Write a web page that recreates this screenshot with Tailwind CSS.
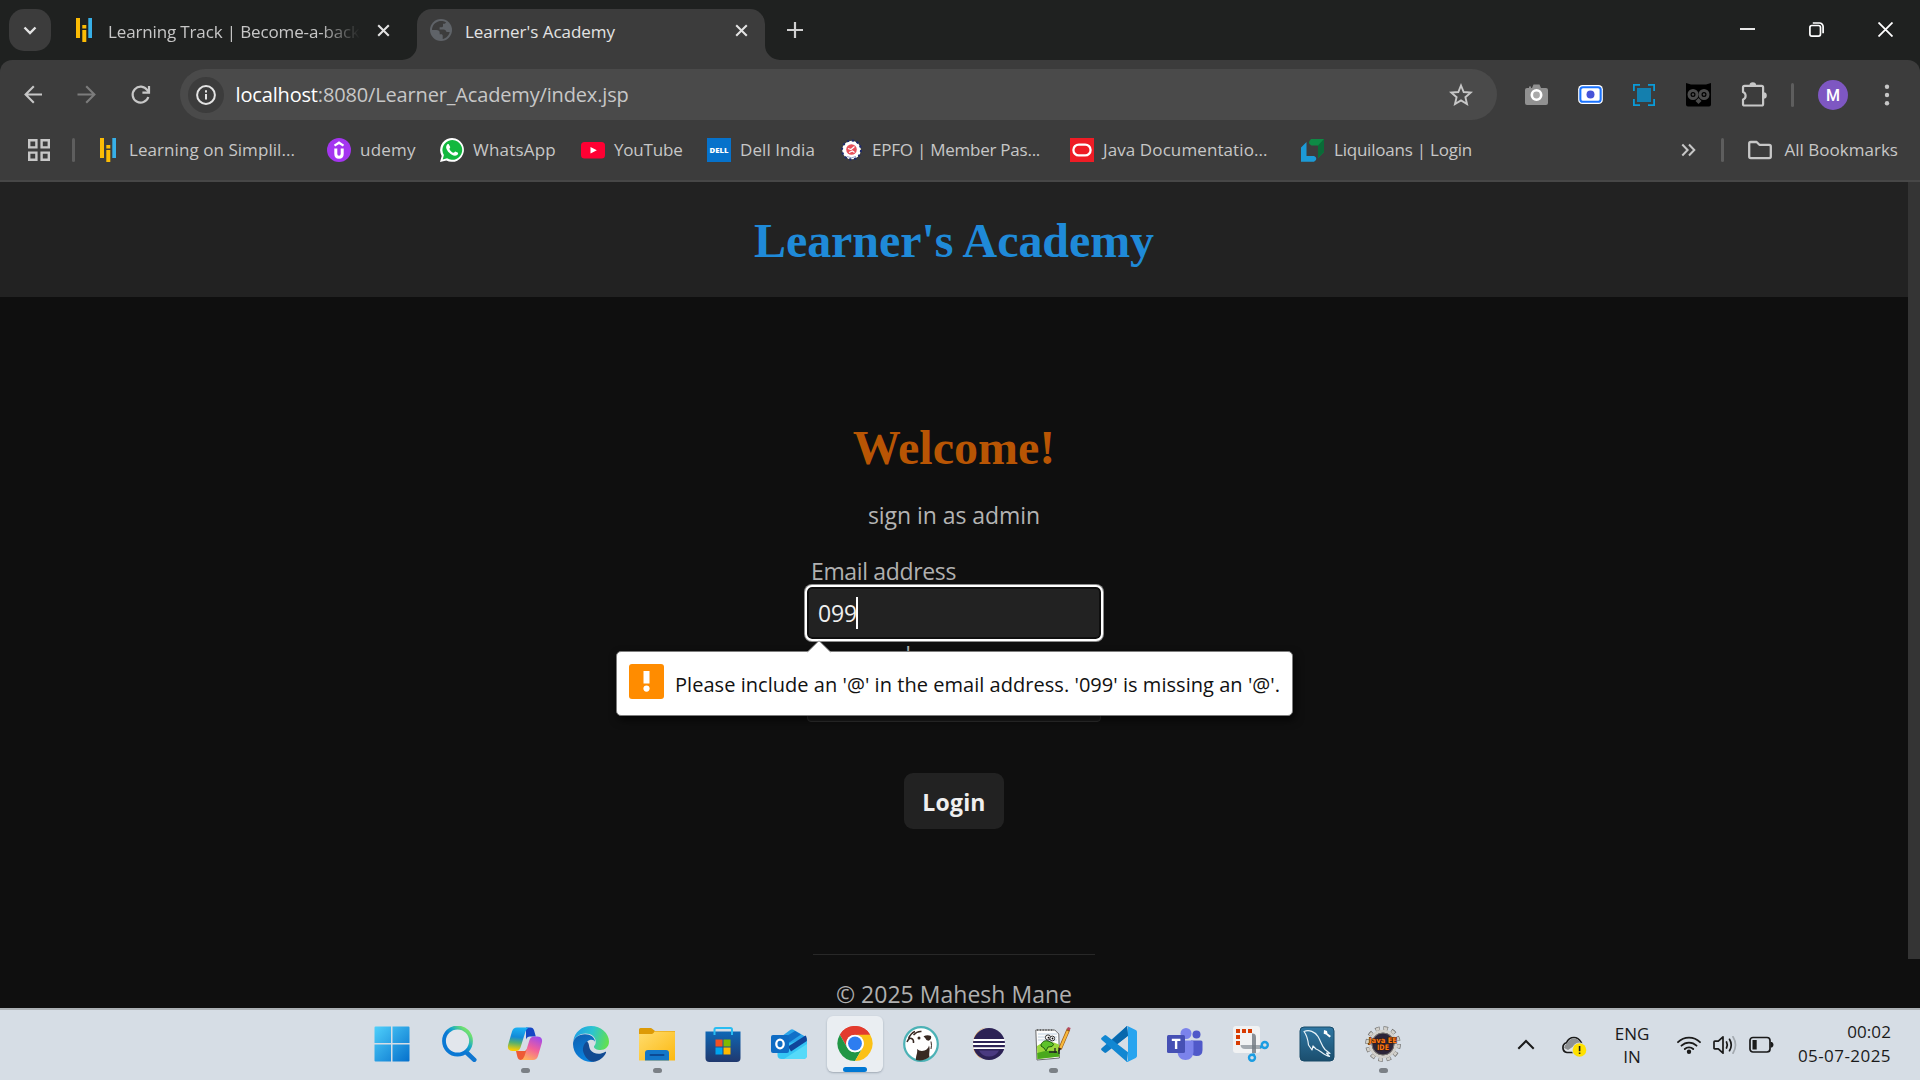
<!DOCTYPE html>
<html lang="en">
<head>
<meta charset="utf-8">
<title>Learner's Academy</title>
<script src="https://cdn.jsdelivr.net/npm/@tailwindcss/browser@4"></script>
</head>
<body class="w-[1920px] h-[1080px] overflow-hidden bg-[#0f0f0f] font-['Open_Sans','Noto_Sans',sans-serif] flex flex-col">

<!-- Tab strip -->
<header class="h-[60px] shrink-0 bg-[#1f2120] flex items-start text-[17px] leading-[42px] pt-[9px]">
  <div class="ml-[9px] size-[42px] rounded-[15px] bg-[#3c3c3c] flex items-center justify-center">
    <svg class="size-[14px]" viewBox="0 0 14 14" fill="none" stroke="#e3e3e3" stroke-width="2.4"><path d="M1.500 4.500 7 10l5.500-5.500"/></svg>
  </div>
  <div class="ml-[21px] w-[345px] h-[42px] flex items-center">
    <svg class="w-[24px] h-[24px] shrink-0" viewBox="0 0 24 24"><path fill="#fbbc05" d="M4 0h4v20H4zM10.300 7h4v3.500h-4zM10.300 12h4v12h-4z"/><path fill="#37b0e8" d="M16.300 0h3.700v20h-3.700z"/></svg>
    <span class="ml-[12px] w-[252px] pt-[3px] overflow-hidden whitespace-nowrap tracking-[-0.14px] text-[#c7c7c7] [mask-image:linear-gradient(to_right,#000_84%,transparent_100%)]">Learning Track | Become-a-back</span>
    <svg class="ml-[17px] size-[13px] shrink-0" viewBox="0 0 14 14" stroke="#e3e3e3" stroke-width="2.200"><path d="M1.300 1.300l11.400 11.400M12.700 1.300 1.300 12.700"/></svg>
  </div>
  <div class="relative w-[348px] h-[51px] rounded-t-[15px] bg-[#3c3c3c] flex items-start">
    <svg class="absolute -left-[15px] bottom-0 size-[15px]" viewBox="0 0 15 15"><path fill="#3c3c3c" d="M15 0v15H0A15 15 0 0 0 15 0z"/></svg>
    <svg class="absolute -right-[15px] bottom-0 size-[15px]" viewBox="0 0 15 15"><path fill="#3c3c3c" d="M0 0v15h15A15 15 0 0 1 0 0z"/></svg>
    <svg class="ml-[13px] mt-[10px] size-[22px] shrink-0" viewBox="0 0 22 22"><circle cx="11" cy="11" r="11" fill="#5f6368"/><path fill="#3c3c3c" d="M9 2.200C5 3.200 2.100 6.500 2 11l4.500 0c2 0 3.200 1 3.200 2.800v1.400h1.500c1 0 1.500.6 1.500 1.600V20c3.500-.7 6.300-3.500 7-7h-3.200c-.4-1.600-1.300-2.600-3-2.600H9.600V8.300h1.800c1 0 1.600-.6 1.600-1.600V4.800h1.800l1.300-1.200C14 2 11 1.800 9 2.200z"/></svg>
    <span class="ml-[13px] w-[270px] pt-[2px] whitespace-nowrap tracking-[-0.03px] text-[#e3e3e3]">Learner's Academy</span>
    <svg class="mt-[15px] size-[13px] shrink-0" viewBox="0 0 14 14" stroke="#e3e3e3" stroke-width="2.200"><path d="M1.300 1.300l11.400 11.400M12.700 1.300 1.300 12.700"/></svg>
  </div>
  <svg class="ml-[22px] mt-[13px] size-[16px]" viewBox="0 0 16 16" stroke="#d0d0d0" stroke-width="2.200"><path d="M8 0v16M0 8h16"/></svg>
  <div class="ml-auto mr-[27px] mt-[13px] flex gap-[54px]">
    <svg class="size-[15px]" viewBox="0 0 15 15"><path d="M0 7h15" stroke="#fff" stroke-width="1.800"/></svg>
    <svg class="size-[15px]" viewBox="0 0 15 15" fill="none" stroke="#fff" stroke-width="1.700"><rect x=".9" y="3.500" width="10.600" height="10.600" rx="2"/><path d="M3.800 1h6.700a3.600 3.600 0 0 1 3.600 3.600v6.600"/></svg>
    <svg class="size-[15px]" viewBox="0 0 15 15" stroke="#fff" stroke-width="1.800"><path d="M.5.5l14 14M14.500.5l-14 14"/></svg>
  </div>
</header>

<div class="shrink-0 bg-[#1f2120]">
<div class="h-[122px] rounded-t-[12px] bg-[#3c3c3c] border-b-2 border-[#474747]">
  <!-- Navigation toolbar -->
  <nav class="h-[69px] pt-[9px] flex items-start">
    <div class="h-[51px] w-[180px] pl-[24px] flex items-center">
      <svg class="size-[19px]" viewBox="0 0 19 19" fill="none" stroke="#c7c7c7" stroke-width="2.100"><path d="M18 9.500H1.800M9.800 1.300 1.600 9.500l8.200 8.200"/></svg>
      <svg class="ml-[34px] size-[19px]" viewBox="0 0 19 19" fill="none" stroke="#7c7c7c" stroke-width="2.100"><path d="M.5 9.500h16.700M9.200 1.300l8.200 8.200-8.200 8.200"/></svg>
      <svg class="ml-[35px] size-[20px]" viewBox="0 0 20 20" fill="none" stroke="#c7c7c7" stroke-width="2.200"><path d="M17.300 12a8 8 0 1 1-1-6.800l1.700 2"/><path d="M18 1v6.600h-6.600"/></svg>
    </div>
    <div class="w-[1317px] h-[51px] rounded-full bg-[#4a4a4a] flex items-center pl-[8px] pr-[24px]">
      <div class="size-[36px] rounded-full bg-[#3c3c3c] flex items-center justify-center">
        <svg class="size-[20px]" viewBox="0 0 20 20" fill="none" stroke="#e3e3e3" stroke-width="2"><circle cx="10" cy="10" r="8.900"/><path d="M10 9v5.600M10 5.300v2.200"/></svg>
      </div>
      <span class="ml-[11.500px] text-[20px] tracking-[-0.16px] text-[#c7c7c7] whitespace-nowrap"><span class="text-white">localhost</span>:8080/Learner_Academy/index.jsp</span>
      <svg class="ml-auto size-[24px]" viewBox="0 0 24 24" fill="none" stroke="#c7c7c7" stroke-width="1.900"><path d="M12 2.500l2.700 6.500 7 .6-5.300 4.600 1.600 6.900-6-3.700-6 3.700 1.600-6.900L2.300 9.600l7-.6z"/></svg>
    </div>
    <div class="ml-[28px] h-[51px] flex items-center">
      <svg class="w-[23px] h-[22px]" viewBox="0 0 23 22"><path fill="#919191" d="M2 4h2V2.500h2V4h1l1.500-3.500h6L16 4h5a2 2 0 0 1 2 2v13a2 2 0 0 1-2 2H2a2 2 0 0 1-2-2V6a2 2 0 0 1 2-2z"/><circle cx="11.500" cy="11" r="4.700" fill="#a9a9a9" stroke="#fff" stroke-width="2.600"/></svg>
      <svg class="ml-[30px] w-[25px] h-[19px]" viewBox="0 0 26 20"><rect width="26" height="20" rx="4.500" fill="#fff"/><rect x="2.300" y="2.300" width="21.400" height="15.400" rx="2.800" fill="#fff" stroke="#1a73ff" stroke-width="2.200"/><circle cx="13" cy="10" r="4.200" fill="#4653d8"/></svg>
      <svg class="ml-[29px] size-[24px]" viewBox="0 0 24 24"><rect x="5" y="5" width="14" height="14" fill="#147fae"/><path fill="none" stroke="#0a9bd8" stroke-width="1.800" d="M1.900 8V1.900H8M16 1.900h6.100V8M22.100 16v6.100H16M8 22.100H1.900V16"/></svg>
      <svg class="ml-[30px] size-[25px]" viewBox="0 0 25 25"><path fill="#000" d="M0 1l5 1.400h15L25 1v21.500q0 2-2 2H2q-2 0-2-2z"/><circle cx="7" cy="12.500" r="4" fill="none" stroke="#4b4b4b" stroke-width="3"/><circle cx="18" cy="12.500" r="4" fill="none" stroke="#4b4b4b" stroke-width="3"/><circle cx="7" cy="12.500" r="1.200" fill="#4b4b4b"/><circle cx="18" cy="12.500" r="1.200" fill="#4b4b4b"/><path fill="#4b4b4b" d="M12.500 16l3 3-3 3-3-3z"/></svg>
      <svg class="ml-[30px] -mt-[2px] size-[26px]" viewBox="0 0 26 26"><path fill="none" stroke="#c7c7c7" stroke-width="2.200" stroke-linejoin="round" d="M2 6.500q0-1.600 1.600-1.600h17q1.500 0 1.500 1.600v16.400q0 1.600-1.500 1.600h-17Q2 24.500 2 22.900v-4.400a4 4 0 0 0 0-7.500z"/><path fill="#c7c7c7" d="M8.500 4.500a3.300 3.300 0 0 1 6.600 0zM22.500 11.200a3.300 3.300 0 0 1 0 6.600z"/></svg>
      <div class="ml-[24px] w-[3px] h-[24px] rounded bg-[#5e5e5e]"></div>
      <div class="ml-[24px] size-[30px] rounded-full bg-[#7e57c2] text-white font-[Roboto,sans-serif] text-[16px] leading-[31px] font-medium text-center">M</div>
      <svg class="ml-[36px] w-[6px] h-[22px]" viewBox="0 0 6 22" fill="#c7c7c7"><circle cx="3" cy="2.700" r="2.200"/><circle cx="3" cy="11" r="2.200"/><circle cx="3" cy="19.300" r="2.200"/></svg>
    </div>
  </nav>
  <!-- Bookmarks bar -->
  <div class="h-[42px] flex items-center text-[17px] leading-[24px] text-[#c7c7c7] whitespace-nowrap pl-[28px] pr-[22px]">
    <svg class="size-[22px] shrink-0" viewBox="0 0 22 22" fill="none" stroke="#c7c7c7" stroke-width="2.400"><path d="M1.200 1.200h7.200v7.200H1.200zM13.600 1.200h7.200v7.200h-7.200zM1.200 13.600h7.200v7.200H1.200zM13.600 13.600h7.200v7.200h-7.200z"/></svg>
    <div class="ml-[22px] mr-[21px] w-[3px] h-[24px] rounded bg-[#5e5e5e]"></div>
    <div class="w-[231px] flex gap-[9px]">
      <svg class="size-[24px]" viewBox="0 0 24 24"><path fill="#fbbc05" d="M4 0h4v20H4zM10.300 7h4v3.500h-4zM10.300 12h4v12h-4z"/><path fill="#37b0e8" d="M16.300 0h3.700v20h-3.700z"/></svg>
      <span class="tracking-[0.06px]">Learning on Simplil...</span>
    </div>
    <div class="w-[113px] flex gap-[9px]">
      <svg class="size-[24px]" viewBox="0 0 24 24"><circle cx="12" cy="12" r="12" fill="#a435f0"/><path fill="none" stroke="#fff" stroke-width="2.300" d="M7.500 7.600 12 4.700l4.500 2.900"/><path fill="none" stroke="#fff" stroke-width="3" d="M8.800 10.500v5.200q0 3.500 3.200 3.500t3.200-3.500v-5.200"/></svg>
      <span class="tracking-[0.2px]">udemy</span>
    </div>
    <div class="w-[141px] flex gap-[9px]">
      <svg class="size-[24px]" viewBox="0 0 24 24"><path fill="#fff" d="M0 24l1.700-6.100A11.900 11.900 0 1 1 6.300 22.400z"/><path fill="#12b83e" d="M2.700 21.400l1.200-4.300a9.900 9.900 0 1 1 3.200 3.200z"/><path fill="#fff" d="M8.900 6.400c-.3-.6-1.200-.6-1.700 0C5 8.800 6.700 12 9 14.500c2.400 2.500 5.800 4.200 8.200 2.500.9-.6 1-1.500.8-2.200l-2.700-1.300c-.6 0-1 1.300-1.700 1.300-1.300-.3-3.700-2.300-4.200-3.900 0-.5 1-1.100.8-1.900z"/></svg>
      <span class="tracking-[0.2px]">WhatsApp</span>
    </div>
    <div class="w-[126px] flex gap-[9px]">
      <svg class="size-[24px]" viewBox="0 0 24 24"><rect y="4" width="24" height="16.500" rx="3.500" fill="#ff0033"/><path fill="#fff" d="M9.500 9l6.300 3.300-6.300 3.300z"/></svg>
      <span class="tracking-[-0.18px]">YouTube</span>
    </div>
    <div class="w-[132px] flex gap-[9px]">
      <svg class="size-[24px]" viewBox="0 0 24 24"><path fill="#0672cb" d="M0 0h24v24H0z"/><text x="12" y="14.800" text-anchor="middle" textLength="19" lengthAdjust="spacingAndGlyphs" font-size="7.500" font-weight="800" font-family="Open Sans, sans-serif" fill="#fff">DELL</text></svg>
      <span class="tracking-[0.08px]">Dell India</span>
    </div>
    <div class="w-[231px] flex gap-[9px]">
      <svg class="size-[24px]" viewBox="0 0 24 24"><circle cx="12.500" cy="12" r="9.300" fill="#fff" stroke="#1d2a6b" stroke-width="2.400" stroke-dasharray="2.200 2.670"/><circle cx="12.500" cy="12" r="8.500" fill="#fff"/><circle cx="12.500" cy="11.500" r="5.300" fill="#e8505a"/><path fill="none" stroke="#fff" stroke-width="1.200" d="M9 10.500l3 1 3.500-3M10 14.500l3.500-1.500 2 1.500"/><path d="M8 18.500q4.500 2.500 9 0" fill="none" stroke="#9aa4c8" stroke-width="1"/></svg>
      <span class="tracking-[-0.24px]">EPFO | Member Pas...</span>
    </div>
    <div class="w-[231px] flex gap-[9px]">
      <svg class="size-[24px]" viewBox="0 0 24 24"><path fill="#ee1c25" d="M0 0h24v24H0z"/><rect x="3.400" y="6.600" width="17.200" height="10.800" rx="5.400" fill="none" stroke="#fff" stroke-width="2.300"/></svg>
      <span class="tracking-[0.1px]">Java Documentatio...</span>
    </div>
    <div class="flex gap-[9px]">
      <svg class="size-[24px]" viewBox="0 0 24 24"><path fill="#1c9ad6" d="M0 9.500 5.500 4v14H13q3 1 2 4l-2 1.700H0z"/><path fill="#0e8a45" d="M10 1h13v13l-6 6V7.500h-6.500Q7 5.500 8.500 3z"/><path fill="#0a6b38" d="M17 7.500 23 1v13l-6 6z"/></svg>
      <span class="tracking-[-0.22px]">Liquiloans | Login</span>
    </div>
    <svg class="ml-auto w-[15px] h-[14px] shrink-0" viewBox="0 0 15 14" fill="none" stroke="#c7c7c7" stroke-width="2"><path d="M1.300 1.500 6.600 7l-5.300 5.500M8 1.500 13.300 7 8 12.500"/></svg>
    <div class="ml-[25px] w-[3px] h-[24px] rounded bg-[#5e5e5e]"></div>
    <svg class="ml-[24px] w-[24px] h-[20px] shrink-0" viewBox="0 0 24 20" fill="none" stroke="#c7c7c7" stroke-width="2.300" stroke-linejoin="round"><path d="M2.800 2h5.800l2.800 2.800h9.800q1.600 0 1.600 1.600v10.200q0 1.600-1.600 1.600H2.800q-1.600 0-1.600-1.600V3.600Q1.200 2 2.800 2z"/></svg>
    <span class="ml-[12px] tracking-[0.02px]">All Bookmarks</span>
  </div>
</div>
</div>

<!-- Web page -->
<div class="h-[826px] shrink-0 flex overflow-hidden">
  <main class="w-[1908px] h-[826px] overflow-hidden flex flex-col items-center">
    <div class="w-full h-[115px] shrink-0 bg-[#222] flex items-center justify-center pt-[2px]">
      <h1 class="font-['Liberation_Serif',serif] font-bold text-[48px] leading-[56px] tracking-[-0.07px] text-[#1f8ad8]">Learner's Academy</h1>
    </div>
    <h1 class="mt-[123px] font-['Liberation_Serif',serif] font-bold text-[48px] leading-[56px] text-[#b85504]">Welcome!</h1>
    <p class="mt-[23px] text-[23px] leading-[32px] tracking-[-0.06px] text-[#b4b4b4]">sign in as admin</p>
    <form class="mt-[26px] w-[294px] text-[23px] leading-[28px] text-[#b0b0b0] flex flex-col">
      <label class="pl-[4px] tracking-[-0.35px]">Email address</label>
      <div class="relative z-10 mt-[2px] h-[52px] rounded-[5px] border-2 border-[#0f0f0f] bg-[#222] outline-2 outline-[#fff] shadow-[0_0_0_3px_#8c8c8c] flex items-center pl-[9px] text-[#efefef]">
        <span class="tracking-[-0.15px]">099</span><span class="w-[2px] h-[32px] bg-white -ml-px -mt-px"></span>
        <!-- Validation bubble -->
        <div class="absolute left-[-193px] top-[62px] w-[677px] h-[65px] rounded-[5px] border border-[#7d7d7d] bg-white shadow-[2px_4px_8px_rgba(0,0,0,0.7)] flex text-[20px] leading-[32px] text-[#111]">
          <svg class="absolute left-[189px] top-[-12px] w-[26px] h-[13px]" viewBox="0 0 26 13"><path fill="#fff" stroke="#9a9a9a" stroke-width="1" d="M1 12.500 13 .8 25 12.500"/><path fill="#fff" d="M1.500 12h23v1h-23z"/></svg>
          <svg class="ml-[12px] mt-[12px] size-[35px] shrink-0" viewBox="0 0 35 35"><rect width="35" height="35" rx="3" fill="#ff8c00"/><path fill="#fff" d="M14.500 7h6v12.500h-6z"/><circle cx="17.500" cy="24.600" r="3.100" fill="#fff"/></svg>
          <span class="ml-[11px] mt-[17px] whitespace-nowrap tracking-[0.04px]">Please include an '@' in the email address. '099' is missing an '@'.</span>
        </div>
      </div>
      <label class="pl-[4px] mt-[2px] tracking-[-0.5px]">Password</label>
      <div class="h-[53px] rounded-[4px] border border-[#303030] bg-[#1c1c1c]"></div>
      <button type="button" class="mt-[51px] w-[100px] h-[56px] self-center rounded-[9px] bg-[#222] text-[#efefef] font-bold pt-[2px] tracking-[0.2px]">Login</button>
    </form>
    <div class="mt-[125px] w-[282px] h-px shrink-0 bg-[#282828]"></div>
    <footer class="mt-[25px] text-[23px] leading-[28px] tracking-[0.02px] text-[#b0b0b0]">© 2025 Mahesh Mane</footer>
  </main>
  <div class="w-[12px] h-[777px] bg-[#343434]"></div>
</div>

<!-- Taskbar -->
<footer class="h-[72px] shrink-0 border-t-2 border-[#acb1b5] bg-[#d6dde5] flex items-start">
  <div class="ml-[360px] grid grid-cols-[repeat(16,66px)] pt-[6px] h-[70px]">
    <div class="flex flex-col items-center pt-[10px] pr-[3px]">
      <svg class="size-[36px]" viewBox="0 0 36 36"><defs><linearGradient id="win" x1="0" y1="0" x2="1" y2="1"><stop stop-color="#4fd0fb"/><stop offset="1" stop-color="#0570cc"/></linearGradient></defs><path fill="url(#win)" d="M1.500.5H17V17H.5V1.500a1 1 0 0 1 1-1zM18.500.5h16a1 1 0 0 1 1 1V17h-17zM.5 18.500H17v17H1.500a1 1 0 0 1-1-1zM18.500 18.500h17v16a1 1 0 0 1-1 1h-16z"/></svg>
    </div>
    <div class="flex flex-col items-center pt-[10px]">
      <svg class="size-[36px]" viewBox="0 0 36 36"><defs><linearGradient id="sea" x1="0" y1="1" x2="1" y2="0"><stop offset=".45" stop-color="#0a78d4"/><stop offset=".62" stop-color="#17a8c8"/><stop offset=".85" stop-color="#6fe070"/></linearGradient></defs><path d="M25 26l8.300 7.800" stroke="#0f76d0" stroke-width="4.500" stroke-linecap="round"/><circle cx="16.500" cy="15" r="13.500" fill="#e2e6ec" stroke="url(#sea)" stroke-width="3.800"/></svg>
    </div>
    <div class="flex flex-col items-center pt-[10px]">
      <svg class="size-[36px]" viewBox="0 0 36 36"><defs><linearGradient id="cpa" x1=".4" y1="0" x2=".3" y2="1"><stop stop-color="#1bb0f4"/><stop offset=".4" stop-color="#128ad8"/><stop offset=".65" stop-color="#55b070"/><stop offset=".95" stop-color="#f6cc04"/></linearGradient><linearGradient id="cpb" x1=".7" y1="0" x2=".3" y2="1"><stop stop-color="#a34be8"/><stop offset=".5" stop-color="#f2609a"/><stop offset="1" stop-color="#ffb05c"/></linearGradient></defs><path fill="#1546c4" d="M19 1.500h4.500c2 0 3 1 3.600 3l1.700 6H23q-3 0-4 3z"/><path fill="#ee5a35" d="M9 25h9l3-3-2.500 8q-1.200 4-4.500 4c-2 0-3-1-3.600-3z"/><path fill="url(#cpa)" d="M10 1.500h12q-2.500.8-3.500 4l-5 16q-1.200 3.500-4.500 3.500H5.500c-4 0-5.300-3-4.300-6.500L5 5.500q1.200-4 5-4z"/><path fill="url(#cpb)" d="M26 34H14q2.500-.8 3.500-4l5-16q1.200-3.500 4.500-3.500h3.500c4 0 5.300 3 4.300 6.500L31 30q-1.200 4-5 4z"/></svg>
      <div class="mt-[6px] w-[9px] h-[5px] rounded-full bg-[#7b8086]"></div>
    </div>
    <div class="flex flex-col items-center pt-[10px]">
      <svg class="size-[36px]" viewBox="0 0 36 36"><defs><linearGradient id="eda" x1="0" y1=".3" x2="1" y2=".5"><stop stop-color="#1f9fe6"/><stop offset=".5" stop-color="#2cc4d0"/><stop offset="1" stop-color="#62e050"/></linearGradient><linearGradient id="edb" x1="0" y1="0" x2=".3" y2="1"><stop stop-color="#0f5fb0"/><stop offset="1" stop-color="#0a82dd"/></linearGradient></defs><path fill="url(#eda)" d="M.3 15C1.500 6 9 0 18 0c10 0 18 7.500 18 15.500C36 21 32 24 27.500 24c-4 0-6.500-1.500-6.500-3 0-1.200 1.800-2 1.800-5.200C22.800 11 18 7.500 12.500 7.500 7 7.500 2.500 10.500.3 15z"/><path fill="url(#edb)" d="M0 18C0 12.500 5.500 8.300 12 8.300c5.500 0 10 3 10 7.500-.5-1.500-2.500-2.500-4.500-2-4 1-6 5-5.500 9.500C12.800 29.500 17 35 22 35.500 10.500 38 0 29 0 18z"/><path fill="#124a92" d="M14 15.500c-3 2-4.800 6-3.700 10.500C12 32 17 36 20.500 35.800c5.500-.4 10.500-4.300 12.500-9 .3-.8-.3-1.200-1-.8-5 3-12 2-14.500-2C15.500 20.500 16.500 17 14 15.500z"/></svg>
    </div>
    <div class="flex flex-col items-center pt-[10px]">
      <svg class="size-[36px]" viewBox="0 0 36 36"><defs><linearGradient id="fol" x1="0" y1="0" x2="1" y2="1"><stop stop-color="#ffdc6e"/><stop offset="1" stop-color="#fcb910"/></linearGradient></defs><path fill="#dd9a06" d="M0 3.500Q0 2 1.500 2h10q1 0 2 1l2.500 2H36v5H0z"/><path fill="url(#fol)" d="M0 8h12.500q1.200 0 2-1l1-1.400H36V34.500H0z"/><path fill="#1377c9" d="M6 34.500V27q0-3 3-3h18q3 0 3 3v7.500z"/><rect x="10.500" y="28" width="15" height="2" rx="1" fill="#0c4a94"/></svg>
      <div class="mt-[6px] w-[9px] h-[5px] rounded-full bg-[#7b8086]"></div>
    </div>
    <div class="flex flex-col items-center pt-[10px]">
      <svg class="size-[36px]" viewBox="0 0 36 36"><defs><linearGradient id="sto" x1="0" y1="0" x2="0" y2="1"><stop stop-color="#0f67b5"/><stop offset="1" stop-color="#20386e"/></linearGradient></defs><path fill="url(#sto)" d="M.5 5.500h35V32q0 4-4 4h-27q-4 0-4-4z"/><path fill="none" stroke="#29bdf2" stroke-width="2" d="M9.500 9V3.500Q9.500 2 11 2h14.500Q27 2 27 3.500V9"/><path fill="#f25022" d="M10.500 13.500h7v7h-7z"/><path fill="#7fba00" d="M18.500 13.500h7v7h-7z"/><path fill="#00a4ef" d="M10.500 21.500h7v7h-7z"/><path fill="#ffb900" d="M18.500 21.500h7v7h-7z"/></svg>
    </div>
    <div class="flex flex-col items-center pt-[10px]">
      <svg class="size-[36px]" viewBox="0 0 36 36"><path fill="#2aa5ea" d="M7 13 19.500 3.700q1.500-1 3 0L35 11 12 24z"/><path fill="#1170c8" d="M11 13l13-8 6 3.500L16 18z"/><path fill="#35c6f4" d="M6.500 21 36 12v17q0 4-4 4H10.500q-4 0-4-4z"/><path fill="#10449a" d="M17 20.500 34.500 9.500q1.500 1 1.300 5.500L20 25.500z"/><path fill="#55daf9" d="M13 33 36 18v11q0 4-4 4z"/><rect x="0" y="9" width="18" height="18" rx="2" fill="#0f6cc4"/><ellipse cx="9" cy="18" rx="3.700" ry="4.300" fill="none" stroke="#fff" stroke-width="2.300"/></svg>
    </div>
    <div class="mx-[5px] h-[56px] rounded-[6px] bg-[#eaeef2] shadow-[0_1px_2px_rgba(90,105,120,0.45)] flex flex-col items-center pt-[10px]">
      <svg class="size-[36px]" viewBox="0 0 36 36"><path fill="#e33b2e" d="M2.400 9A18 18 0 0 1 33.600 9L18 9.500z"/><path fill="#e33b2e" d="M2.400 9A18 18 0 0 1 33.600 9H18a9 9 0 0 0-7.800 13.500z"/><path fill="#219645" d="M2.400 9l7.800 13.500A9 9 0 0 0 25.800 22.500L18 36A18 18 0 0 1 2.400 9z"/><path fill="#fbc116" d="M33.600 9A18 18 0 0 1 18 36l7.800-13.500A9 9 0 0 0 18 9z"/><circle cx="18" cy="18" r="9" fill="#fff"/><circle cx="18" cy="18" r="7.100" fill="#2d7df0"/></svg>
      <div class="mt-[6px] w-[24px] h-[5px] shrink-0 rounded-full bg-[#0078d4]"></div>
    </div>
    <div class="flex flex-col items-center pt-[10px]">
      <svg class="size-[36px]" viewBox="0 0 36 36"><circle cx="18" cy="18" r="16.800" fill="#fff" stroke="#4cb2b6" stroke-width="2.200"/><path fill="#382923" d="M13 34c-.5-4 2-7 1-11 2 2 5 2.500 7.500 1.500 2.500-1 4-2.500 4.500-5 1.500 4-.5 8 .5 11.500q-6 4.500-13.500 3z"/><path fill="#382923" d="M20.500 10.300q4-2 7.500-.2.800 3-2 4.500-3 .3-3.500-2z"/><path fill="none" stroke="#382923" stroke-width="1.500" d="M4 16q2-4.500 4.500-3.500t2 4.500M10.500 9q3.500-4 8-3.500M5.500 12.500Q8 7 12 5.500"/><circle cx="16" cy="12" r="1.500" fill="#382923"/><path fill="none" stroke="#382923" stroke-width="1" d="M28 15.500q1 4 0 7.500"/></svg>
    </div>
    <div class="flex flex-col items-center pt-[10px]">
      <svg class="size-[36px]" viewBox="0 0 36 36"><path fill="#f7942a" d="M17 1.600A17 17 0 0 0 17 34.400 16 16 0 0 1 4 18 16 16 0 0 1 17 1.600z"/><ellipse cx="20" cy="18" rx="16" ry="16" fill="#2c2255"/><path fill="#4a3a80" d="M10 24.500h20q-3 6-10 6t-10-6z"/><path fill="#fff" d="M4.200 13h31.600v1.900H4.200zM4 17.100h32V19H4zM4.200 21.200h31.600v1.900H4.200z"/></svg>
    </div>
    <div class="flex flex-col items-center pt-[10px]">
      <svg class="size-[36px]" viewBox="0 0 36 36"><path fill="#fcfcfc" stroke="#6a6a6a" stroke-width="1" d="M.8 4h19l4 4 .6 24L2 34z"/><path stroke="#555" stroke-width="1.600" stroke-dasharray="1.200 1.600" d="M2 4h17"/><path stroke="#b8cde0" stroke-width=".9" d="M3 8h19M3 11h19M3 14h19"/><path fill="#9bd83c" d="M2 20q10-7 22-1.500l.3 12L2.500 33z"/><path fill="#49a81c" d="M2.200 27q12-4 22-1l.1 4.500L2.500 33z"/><path fill="#5cc22a" stroke="#1d5a10" stroke-width="1" d="M6 20c0-4 4-6 7-5l4 1.500q3 2 0 4l-4 .5-2 4-2-3z"/><circle cx="13" cy="11.500" r="2.600" fill="#fff" stroke="#333"/><circle cx="17.300" cy="12.500" r="2.400" fill="#fff" stroke="#333"/><circle cx="13.500" cy="11.700" r=".9"/><circle cx="17.500" cy="12.500" r=".9"/><path stroke="#222" stroke-width="1.300" fill="none" d="M14 26h8M20 22v5M24 24v4"/><path stroke="#9a5a14" stroke-width="3.600" d="M33.600 3 25 23"/><path stroke="#f7b83c" stroke-width="2.300" d="M32.800 5 25.500 22"/><path stroke="#b5485e" stroke-width="3" d="M34.300 1.500 33.200 4"/><path fill="#222" d="M23.300 21.500l3 1.200-3 3.500z"/></svg>
      <div class="mt-[6px] w-[9px] h-[5px] rounded-full bg-[#7b8086]"></div>
    </div>
    <div class="flex flex-col items-center pt-[10px]">
      <svg class="size-[36px]" viewBox="0 0 36 36"><path fill="#0e7cc6" d="M27 9.800 5.300 26.600q-1 .8-2 0L.6 24.200q-1-1 0-2L26 0z"/><path fill="#1287d2" d="M27 26.200 5.300 9.400q-1-.8-2 0L.6 11.800q-1 1 0 2L26 36z"/><path fill="#0867ac" d="M27 9.800 16.500 18l-5-4.200L26 0z"/><path fill="#28a4ef" d="M25.500 0Q26.200 0 27 .3l7.700 3.800Q36 4.700 36 6v24q0 1.300-1.300 1.900L27 35.700q-1.200.5-2-.2 2 .3 2-2V2.500q0-2.300-1.500-2.500z"/></svg>
    </div>
    <div class="flex flex-col items-center pt-[10px]">
      <svg class="size-[36px]" viewBox="0 0 36 36"><circle cx="29.500" cy="8.500" r="4" fill="#5059c9"/><circle cx="19" cy="7.500" r="5.500" fill="#7b83eb"/><path fill="#5059c9" d="M24 14.500h10q1.500 0 1.500 1.500v8q0 6-6 6-4 0-5.500-3z"/><path fill="#7b83eb" d="M11 14.500h14q1.500 0 1.500 1.500v9.500c0 5-3.500 8.500-8 8.500s-8-3.500-8-8.500z"/><rect y="9" width="18" height="18" rx="1.500" fill="#4650b4"/><path fill="#fff" d="M4.800 12.800h8.600v2.300h-3.100v8H7.900v-8H4.800z"/></svg>
    </div>
    <div class="flex flex-col items-center pt-[10px]">
      <svg class="size-[36px]" viewBox="0 0 36 36"><rect width="27" height="27" rx="3" fill="#f1f2f3"/><path fill="#d83b01" d="M3 3h4v4H3zM9 3h4v4H9zM15 3h4v4h-4zM3 9h4v4H3zM3 15h4v4H3z"/><path fill="#8a9097" d="M19 7.500q4-.5 4 4V27h-4z"/><path fill="#a4aab0" d="M7.500 19H28v4H12q-4 0-4.500-4z"/><path fill="#7c838a" d="M19 19h4v4h-4z"/><circle cx="31.800" cy="19" r="3" fill="none" stroke="#1b9de2" stroke-width="2.400"/><circle cx="19" cy="31.800" r="3" fill="none" stroke="#1b9de2" stroke-width="2.400"/><path stroke="#1b9de2" stroke-width="2.400" d="M27 21.300l3-.5M21 27.500l-.5 2.500"/></svg>
    </div>
    <div class="flex flex-col items-center pt-[10px]">
      <svg class="size-[36px]" viewBox="0 0 36 36"><defs><linearGradient id="sql" x1="0" y1="0" x2="0" y2="1"><stop stop-color="#2f77a3"/><stop offset="1" stop-color="#1b4e6e"/></linearGradient></defs><rect x="1" y="1" width="34" height="34" rx="4" fill="url(#sql)" stroke="#184a69"/><path fill="none" stroke="#e8f2f8" stroke-width="1.200" stroke-linejoin="round" d="M5 5.500c5-2 11 0 14 5s3.500 9 7 13l5 4-3.500-.5 3 3.500c-6-1-9.500-6.500-13.500-7.500l-3-3-1 4-3.500-5C9 14 8 9.500 5 5.500z"/><path fill="#fff" d="M25 4l3 1 .5 2.500L32 10l-1.500 1.500L27 8.500l-2.300-.8z"/></svg>
    </div>
    <div class="flex flex-col items-center pt-[10px]">
      <svg class="size-[36px]" viewBox="0 0 36 36"><circle cx="18" cy="18" r="15.800" fill="none" stroke="#6f6e6c" stroke-width="4" stroke-dasharray="4.500 3.773"/><circle cx="18" cy="18" r="15.700" fill="none" stroke="#d2d0cb" stroke-width="2.800" stroke-dasharray="3.500 4.722" stroke-dashoffset="-.5"/><circle cx="18" cy="18" r="12.800" fill="#2c2438" stroke="#d2d0cb" stroke-width="3"/><circle cx="18" cy="18" r="11" fill="none" stroke="#77746f" stroke-width="1"/><g font-family="DejaVu Sans, sans-serif" font-weight="bold" fill="#ff7a14" stroke="#3a1804" stroke-width="1" paint-order="stroke"><text x="18" y="16.500" font-size="7.500" text-anchor="middle" textLength="28" lengthAdjust="spacingAndGlyphs">Java EE</text><text x="18" y="24" font-size="7.500" text-anchor="middle" textLength="12" lengthAdjust="spacingAndGlyphs">IDE</text></g></svg>
      <div class="mt-[6px] w-[9px] h-[5px] rounded-full bg-[#7b8086]"></div>
    </div>
  </div>
  <!-- System tray -->
  <div class="ml-auto mr-[29px] h-[70px] flex items-center text-[17px] leading-[24px] text-[#1a1a1a]">
    <svg class="w-[18px] h-[12px]" viewBox="0 0 18 12" fill="none" stroke="#1a1a1a" stroke-width="2"><path d="M1.300 9.800 9 2l7.700 7.800"/></svg>
    <svg class="ml-[26px] mt-[2px] w-[26px] h-[24px]" viewBox="0 0 26 24"><path fill="#dfe3e7" stroke="#1a1a1a" stroke-width="1.700" d="M6 18.500a5 5 0 0 1-.5-9.700C7 5 10 3.500 13 3.500c3.500 0 5.500 2 6.800 4.300L22 12l-9 6.500z"/><path fill="#8e9193" d="M6 9.500q3-5.500 7.500-5 4.500.5 6 4.500L13 12l-6 4-4-2q.5-3.500 3-4.500z"/><circle cx="18.500" cy="16" r="7.500" fill="#d6dde5"/><circle cx="18.500" cy="16" r="6.800" fill="#ffe100"/><path fill="#1a1a1a" d="M17.800 12h1.600v5.200h-1.600zM17.800 18.400h1.600V20h-1.600z"/></svg>
    <div class="ml-[27px] w-[36px] text-center leading-[23px] -mt-px"><div class="tracking-[-0.1px]">ENG</div><div>IN</div></div>
    <svg class="ml-[27px] w-[24px] h-[20px]" viewBox="0 0 24 20" fill="none" stroke="#1a1a1a" stroke-width="1.800" stroke-linecap="round"><path d="M1 7.200a15.500 15.500 0 0 1 22 0M4.500 10.700a10.600 10.600 0 0 1 15 0M7.800 14a6 6 0 0 1 8.400 0"/><circle cx="12" cy="16.800" r="1.300" fill="#1a1a1a"/></svg>
    <svg class="ml-[12px] w-[25px] h-[20px]" viewBox="0 0 25 20" fill="none" stroke="#1a1a1a" stroke-width="1.700" stroke-linecap="round" stroke-linejoin="round"><path d="M1 7q0-.8.800-.8h3.500L10 1.800v16.400l-4.700-4.400H1.800Q1 13.800 1 13z"/><path d="M13.500 7q1.600 3 0 6M16.500 4.300q3.500 5.700 0 11.400"/><path stroke="#a3a9af" d="M20 1.800q5 8.200 0 16.400"/></svg>
    <svg class="ml-[11px] w-[25px] h-[18px]" viewBox="0 0 25 18"><rect x="1" y="1.500" width="20" height="14.500" rx="3" fill="none" stroke="#1a1a1a" stroke-width="1.700"/><path fill="#1a1a1a" d="M3.500 4h4.200v9.500H3.500zM21.500 6h1.500q1.500 1 1.500 2.700T23 11.500h-1.500z"/></svg>
    <div class="ml-[23px] w-[94px] text-right whitespace-nowrap -mt-[3px]"><div class="tracking-[0.1px]">00:02</div><div class="tracking-[0.44px]">05-07-2025</div></div>
  </div>
</footer>
</body>
</html>
